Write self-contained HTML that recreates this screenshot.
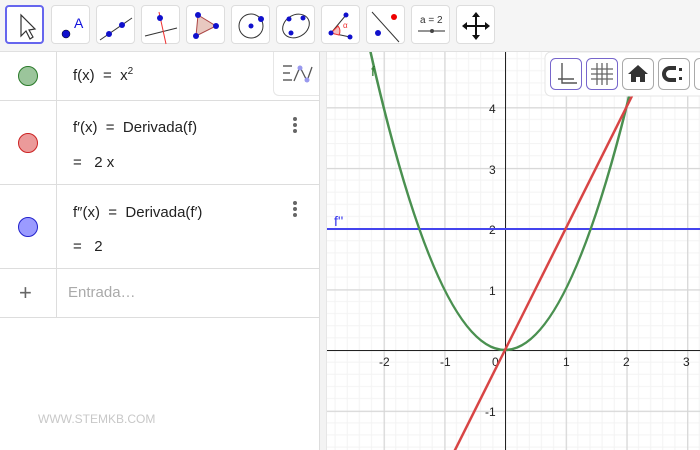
<!DOCTYPE html>
<html><head><meta charset="utf-8"><style>
*{margin:0;padding:0;box-sizing:border-box}
body{width:700px;height:450px;overflow:hidden;background:#fff;font-family:"Liberation Sans","DejaVu Sans",sans-serif;position:relative}
.tb{position:absolute;left:0;top:0;width:700px;height:52px;background:#f5f5f5;border-bottom:1px solid #e0e0e0}
.btn{position:absolute;top:5px;width:39px;height:39px;background:#fff;border:1px solid #ddd;border-radius:4px}
.btn svg{position:absolute;left:0;top:0}
.av{position:absolute;left:0;top:52px;width:320px;height:398px;background:#fff}
.row{position:absolute;left:0;width:320px;border-bottom:1px solid #ddd}
.col{position:absolute;left:0;top:0;bottom:0;width:57px;border-right:1px solid #ddd}
.dot{position:absolute;left:18px;width:20px;height:20px;border-radius:50%}
.tx{position:absolute;left:73px;font-size:15px;color:#222;white-space:pre}
.menu{position:absolute;left:293px;width:4px}
.menu i{display:block;width:4px;height:4px;border-radius:50%;background:#666;margin-bottom:2px}
.div{position:absolute;left:319px;top:52px;width:8px;height:398px;background:#f3f3f3;border-left:1px solid #ddd;border-right:1px solid #e6e6e6}
</style></head><body>
<div class="tb">
 <div class="btn" style="left:5px;border:2px solid #6666ee"><svg width="39" height="39"><path d="M14 8 L14 29 L19 24 L23 32 L26 30 L22 23 L28 22 Z" fill="#fff" stroke="#333" stroke-width="1.2"/></svg></div>
 <div class="btn" style="left:51px"><svg width="39" height="39"><circle cx="14" cy="28" r="4" fill="#1010cc" stroke="#000" stroke-width=".5"/><text x="22" y="22" font-size="14" fill="#1010dd" font-family="Liberation Sans">A</text></svg></div>
 <div class="btn" style="left:96px"><svg width="39" height="39"><line x1="3" y1="34" x2="35" y2="12" stroke="#333"/><circle cx="12" cy="28" r="3" fill="#1010cc"/><circle cx="25" cy="19" r="3" fill="#1010cc"/></svg></div>
 <div class="btn" style="left:141px"><svg width="39" height="39"><line x1="3" y1="30" x2="35" y2="22" stroke="#333"/><line x1="17" y1="6" x2="24" y2="38" stroke="#e33"/><circle cx="18" cy="12" r="3" fill="#1010cc"/></svg></div>
 <div class="btn" style="left:186px"><svg width="39" height="39"><path d="M11 9 L29 20 L9 30 Z" fill="#e8c8c0" stroke="#a44"/><circle cx="11" cy="9" r="3" fill="#1010cc"/><circle cx="29" cy="20" r="3" fill="#1010cc"/><circle cx="9" cy="30" r="3" fill="#1010cc"/></svg></div>
 <div class="btn" style="left:231px"><svg width="39" height="39"><circle cx="19" cy="20" r="12" fill="none" stroke="#333"/><circle cx="19" cy="20" r="2.5" fill="#1010cc"/><circle cx="29" cy="13" r="3" fill="#1010cc"/></svg></div>
 <div class="btn" style="left:276px"><svg width="39" height="39"><ellipse cx="19" cy="20" rx="14" ry="11" transform="rotate(-30 19 20)" fill="none" stroke="#333"/><circle cx="12" cy="13" r="2.5" fill="#1010cc"/><circle cx="26" cy="12" r="2.5" fill="#1010cc"/><circle cx="14" cy="27" r="2.5" fill="#1010cc"/></svg></div>
 <div class="btn" style="left:321px"><svg width="39" height="39"><path d="M9 27 L24 9 M9 27 L28 31" stroke="#333"/><path d="M9 27 L16 20 A8 8 0 0 1 17 29 Z" fill="#f6c0c0" stroke="#e33"/><circle cx="24" cy="9" r="2.5" fill="#1010cc"/><circle cx="9" cy="27" r="2.5" fill="#1010cc"/><circle cx="28" cy="31" r="2.5" fill="#1010cc"/><text x="21" y="22" font-size="8" fill="#e33">α</text></svg></div>
 <div class="btn" style="left:366px"><svg width="39" height="39"><line x1="5" y1="6" x2="32" y2="36" stroke="#333"/><circle cx="27" cy="11" r="3" fill="#e00"/><circle cx="11" cy="27" r="3" fill="#1010cc"/></svg></div>
 <div class="btn" style="left:411px"><svg width="39" height="39"><text x="8" y="17" font-size="10" fill="#333">a = 2</text><line x1="6" y1="25" x2="33" y2="25" stroke="#555" stroke-width="1.3"/><circle cx="20" cy="25" r="2" fill="#444"/></svg></div>
 <div class="btn" style="left:456px"><svg width="39" height="39"><path d="M19 8 V32 M7 20 H31" stroke="#111" stroke-width="2"/><path d="M19 6 L15 11 H23Z M19 34 L15 29 H23Z M5 20 L10 16 V24Z M33 20 L28 16 V24Z" fill="#111"/></svg></div>
</div>

<div class="av">
 <div class="row" style="top:0;height:49px"><div class="col"></div><div class="dot" style="top:14px;background:#9bc59b;border:1px solid #2a7a2a"></div><div class="tx" style="top:14px">f(x)  =  x<sup style="font-size:10px">2</sup></div>
  <div style="position:absolute;left:273px;top:0;width:47px;height:44px;background:#fff;border:1px solid #e6e6e6;border-top:none;border-right:none;border-radius:0 0 0 6px"><svg width="47" height="44"><path d="M9 14H18M9 21H16M9 28H18" stroke="#888" stroke-width="2"/><path d="M20 29 L26 15 L33 29 L38 15" fill="none" stroke="#555" stroke-width="1.3"/><circle cx="26" cy="16" r="2.5" fill="#99e"/><circle cx="33" cy="28" r="2.5" fill="#99e"/></svg></div></div>
 <div class="row" style="top:49px;height:84px"><div class="col"></div><div class="dot" style="top:32px;background:#eb9a9a;border:1px solid #c22"></div><div class="tx" style="top:18px">f′(x)  =  Derivada(f)</div><div class="tx" style="top:53px">=   2 x</div><div class="menu" style="top:16px"><i></i><i></i><i></i></div></div>
 <div class="row" style="top:133px;height:84px"><div class="col"></div><div class="dot" style="top:32px;background:#9b9bff;border:1px solid #22c"></div><div class="tx" style="top:19px">f″(x)  =  Derivada(f′)</div><div class="tx" style="top:53px">=   2</div><div class="menu" style="top:16px"><i></i><i></i><i></i></div></div>
 <div class="row" style="top:217px;height:49px"><div class="col"></div><div style="position:absolute;left:19px;top:11px;font-size:22px;color:#666">+</div><div class="tx" style="top:15px;left:68px;color:#aaa">Entrada…</div></div>
 <div style="position:absolute;left:38px;top:360px;font-size:12px;color:#c8c8c8">WWW.STEMKB.COM</div>
</div>
<div class="div"></div>

<svg style="position:absolute;left:0;top:0" width="700" height="450">
<defs>
<pattern id="g" x="505" y="350" width="60.7" height="60.7" patternUnits="userSpaceOnUse">
<path d="M12.14 0V60.7M24.28 0V60.7M36.42 0V60.7M48.56 0V60.7M0 12.14H60.7M0 24.28H60.7M0 36.42H60.7M0 48.56H60.7" stroke="#f3f3f3" stroke-width="1"/>
<path d="M0.5 0V60.7M0 0.5H60.7" stroke="#d6d6d6" stroke-width="1.5"/>
</pattern>
<clipPath id="c"><rect x="327" y="52" width="373" height="398"/></clipPath>
</defs>
<g clip-path="url(#c)">
<rect x="327" y="52" width="373" height="398" fill="url(#g)"/>
<line x1="327" y1="350.5" x2="700" y2="350.5" stroke="#222"/>
<line x1="505.5" y1="52" x2="505.5" y2="450" stroke="#222"/>
<g font-size="12" fill="#222" font-family="Liberation Sans">
<text x="379" y="366">-2</text><text x="440" y="366">-1</text><text x="492" y="366">0</text><text x="563" y="366">1</text><text x="623" y="366">2</text><text x="683" y="366">3</text>
<text x="489" y="113">4</text><text x="489" y="174">3</text><text x="489" y="234">2</text><text x="489" y="295">1</text><text x="485" y="416">-1</text>
</g>
<line x1="327" y1="229" x2="700" y2="229" stroke="#4444ee" stroke-width="2"/>
<path d="M365.4 28.9 Q505 671 644.6 28.9" fill="none" stroke="#4a9050" stroke-width="2.5"/>
<line x1="453.4" y1="453.2" x2="656.75" y2="46.5" stroke="#d84545" stroke-width="2.5"/>
<text x="371" y="76" font-size="14" fill="#2a7a2a">f</text>
<text x="334" y="226" font-size="14" fill="#3333ee">f''</text>
</g>
<rect x="545" y="52" width="160" height="44" rx="6" fill="#fff" stroke="#e4e4e4"/>
<g fill="#fff" stroke="#aaa">
<rect x="550.5" y="58.5" width="31" height="31" rx="5" stroke="#7766cc"/>
<rect x="586.5" y="58.5" width="31" height="31" rx="5" stroke="#7766cc"/>
<rect x="622.5" y="58.5" width="31" height="31" rx="5"/>
<rect x="658.5" y="58.5" width="31" height="31" rx="5"/>
<rect x="694.5" y="58.5" width="31" height="31" rx="5"/>
</g>
<path d="M562 63V83H577M558 79H574" stroke="#555" stroke-width="1.4" fill="none"/>
<path d="M597 63V85M602 63V85M607 63V85M591 69H613M591 74H613M591 79H613" stroke="#666" stroke-width="1.3"/>
<path d="M638 65L628 74H631V82H636V77H640V82H645V74H648Z" fill="#333"/>
<path d="M676 68H670A6 6 0 0 0 670 80H676" fill="none" stroke="#333" stroke-width="4"/><rect x="679" y="68" width="3" height="3" fill="#333"/><rect x="679" y="77" width="3" height="3" fill="#333"/>
</svg>
</body></html>
